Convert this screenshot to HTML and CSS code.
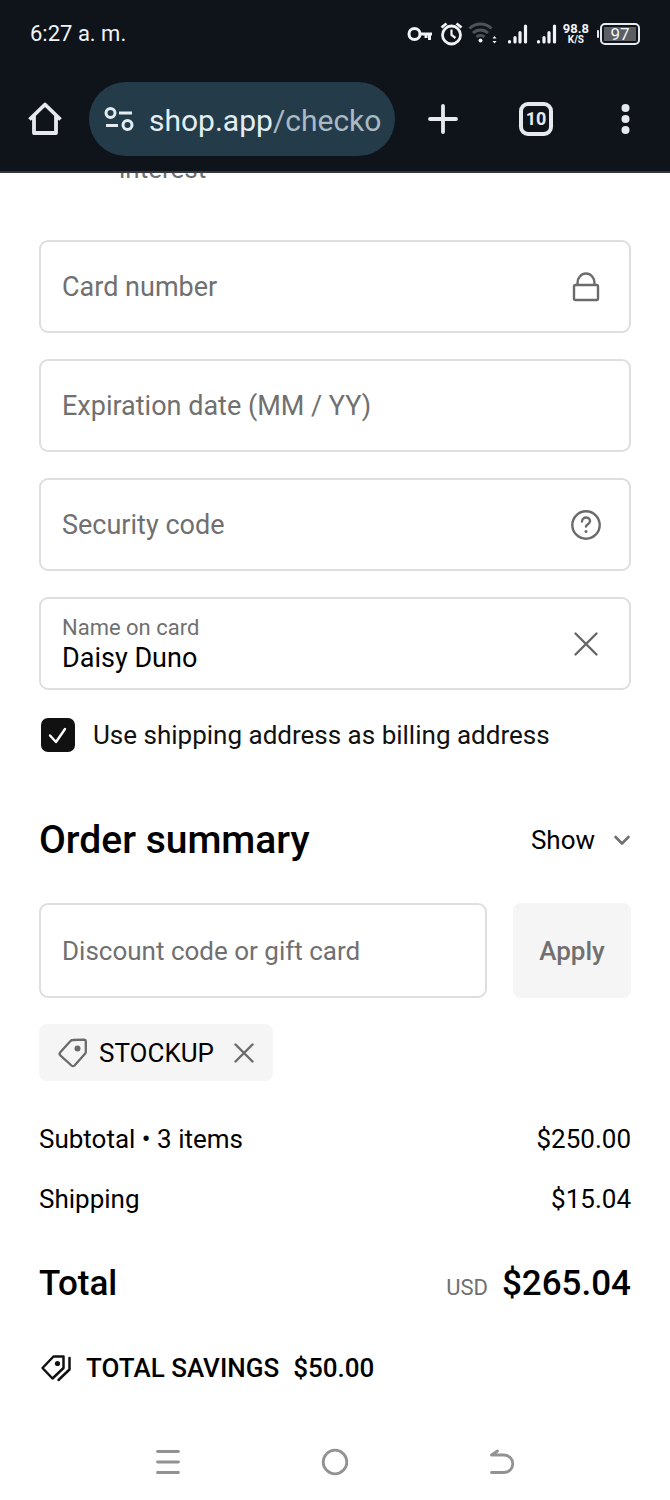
FILE: index.html
```html
<!DOCTYPE html>
<html lang="en">
<head>
<meta charset="utf-8">
<meta name="viewport" content="width=device-width, initial-scale=1">
<title>Checkout</title>
<link rel="stylesheet" href="styles.css">
</head>
<body>
<header class="chrome">
  <div class="status">
    <span class="clock">6:27 a. m.</span>
    <div class="status-icons">
      <svg width="150" height="28" viewBox="0 0 150 28" fill="none" stroke="#f1f4f7" stroke-width="3" aria-hidden="true">
        <circle cx="7.500" cy="14" r="5.500"/><path d="M13 14h12M22.500 14v6M19 14v4"/>
        <circle cx="44.500" cy="15" r="9" stroke-width="2.800"/><path d="M44.500 9.500V15l4 3" stroke-width="2.200"/><path d="M34.500 7.500l5-4M54.500 7.500l-5-4" stroke-width="2.800"/>
        <g stroke="#4d5359" stroke-width="3"><path d="M62.500 8.500a16 16 0 0 1 22 0"/><path d="M66 13a11 11 0 0 1 15 0"/><path d="M69.500 17a6 6 0 0 1 8 0"/></g>
        <g fill="#f1f4f7" stroke="none"><circle cx="73.500" cy="20.500" r="2"/><path d="M85.500 18.500l2-2.500 2 2.500zM85.500 21l2 2.500 2-2.500z"/></g>
        <g stroke-linecap="round" stroke-width="3.200"><path d="M102.500 21.500v.5M108 17.500V22M113 12.500V22M118.500 6V22M131.500 21.500v.5M137 17.500V22M142 12.500V22M147.500 6V22"/></g>
      </svg>
      <span class="speed"><span>98.8</span><span class="unit">K/S</span></span>
      <span class="battery"><span class="level">97</span></span>
    </div>
  </div>
  <div class="toolbar">
    <button class="tool" aria-label="Home"><svg width="36" height="36" viewBox="0 0 36 36" fill="none" stroke="#e6e9ed" stroke-width="3.800" stroke-linejoin="round"><path d="M2.500 18.500L18 3.500l15.500 15M7 15v17h22V15"/></svg></button>
    <button class="address">
      <svg width="30" height="24" viewBox="0 0 30 24" fill="none" stroke="#e3edf2" stroke-width="3"><circle cx="6.500" cy="6" r="4.500"/><path d="M15 6h13M2 18.500h12"/><circle cx="23.500" cy="18" r="4.500"/></svg>
      <span class="url">shop.app<span class="path">/checko</span></span>
    </button>
    <button class="tool" aria-label="New tab"><svg width="32" height="32" viewBox="0 0 32 32" stroke="#e6e9ed" stroke-width="3.800" stroke-linecap="round"><path d="M16 3v26M3 16h26"/></svg></button>
    <button class="tool" aria-label="Open tabs"><span class="tabs">10</span></button>
    <button class="tool" aria-label="Menu"><svg width="10" height="32" viewBox="0 0 10 32" fill="#e6e9ed"><circle cx="4.500" cy="5" r="4"/><circle cx="4.500" cy="16" r="4"/><circle cx="4.500" cy="27" r="4"/></svg></button>
  </div>
</header>
<main class="page">
  <div class="scrolled"><span>interest</span></div>
  <form class="card-form">
    <div class="field">
      <input type="text" placeholder="Card number" aria-label="Card number">
      <svg class="mark" width="32" height="32" viewBox="0 0 32 32" fill="none" stroke="#6b6b6b" stroke-width="2.400"><rect x="4" y="14" width="24" height="15" rx="1.500"/><path d="M7.500 14v-2a8.500 9.500 0 0 1 17 0v2"/></svg>
    </div>
    <div class="field"><input type="text" placeholder="Expiration date (MM / YY)" aria-label="Expiration date (MM / YY)"></div>
    <div class="field">
      <input type="text" placeholder="Security code" aria-label="Security code">
      <button type="button" class="mark" aria-label="Help"><svg width="32" height="32" viewBox="0 0 32 32" fill="none" stroke="#6b6b6b" stroke-width="2.400" stroke-linecap="round"><circle cx="16" cy="16" r="13.700"/><path d="M12 12.500c.3-5.500 8.500-5 8 0-.3 2.500-3.700 2.800-4 5"/><circle cx="16" cy="22.500" r="1.500" fill="#6b6b6b" stroke="none"/></svg></button>
    </div>
    <div class="field">
      <div class="stack"><label for="holder">Name on card</label><input id="holder" type="text" value="Daisy Duno"></div>
      <button type="button" class="mark" aria-label="Clear"><svg width="32" height="32" viewBox="0 0 32 32" stroke="#666" stroke-width="2.400" stroke-linecap="round"><path d="M5.500 5.500l21 21M26.500 5.500l-21 21"/></svg></button>
    </div>
    <label class="billing"><input type="checkbox" checked><svg class="tick" width="34" height="34" viewBox="0 0 34 34" fill="none" stroke="#fff" stroke-width="2.400" stroke-linecap="round" stroke-linejoin="round"><path d="M9 17.500l6 6.500 9-13"/></svg>Use shipping address as billing address</label>
  </form>
  <section class="summary">
    <div class="summary-head">
      <h2>Order summary</h2>
      <button class="show">Show<svg width="18" height="12" viewBox="0 0 18 12" fill="none" stroke="#707070" stroke-width="2.600" stroke-linecap="round" stroke-linejoin="round"><path d="M2.500 3L9 9.500 15.500 3"/></svg></button>
    </div>
    <form class="discount">
      <div class="field"><input type="text" placeholder="Discount code or gift card" aria-label="Discount code or gift card"></div>
      <button type="button" class="apply">Apply</button>
    </form>
    <div class="coupon">
      <svg width="32" height="32" viewBox="0 0 32 32" fill="none" stroke="#6b6b6b" stroke-width="2.300" stroke-linejoin="round"><path d="M16 3l11-.3q1.800 0 1.800 1.800V15q0 1-.8 1.800L17.500 28.500q-1.500 1.300-3 0L3.300 18.300q-1.500-1.500 0-3L13.500 4q1-1 2.500-1z"/><circle cx="20.500" cy="11.500" r="3" fill="#6b6b6b" stroke="none"/></svg>
      <span>STOCKUP</span>
      <button aria-label="Remove STOCKUP"><svg width="20" height="20" viewBox="0 0 20 20" stroke="#6b6b6b" stroke-width="2.400" stroke-linecap="round"><path d="M1.500 1.500l17 17M18.500 1.500l-17 17"/></svg></button>
    </div>
    <div class="row"><span>Subtotal • 3 items</span><span>$250.00</span></div>
    <div class="row"><span>Shipping</span><span>$15.04</span></div>
    <div class="total"><span>Total</span><span class="sum"><small>USD</small>$265.04</span></div>
    <div class="savings">
      <svg width="32" height="28" viewBox="0 0 32 28" fill="none" stroke="#111" stroke-width="2.500" stroke-linejoin="round" stroke-linecap="round"><path d="M13.500 2.500H23.500V14L12.500 24.500 2.500 14z"/><path d="M29.500 4v11.500L18.500 26"/><circle cx="17.500" cy="9.500" r="2.600" fill="#111" stroke="none"/></svg>
      <span>TOTAL SAVINGS</span><span>$50.00</span>
    </div>
  </section>
</main>
<nav class="system">
  <button aria-label="Recent apps"><svg width="28" height="28" viewBox="0 0 28 28" stroke="#929292" stroke-width="2.800" stroke-linecap="round"><path d="M3.500 3.500h21M3.500 14h21M3.500 24.500h21"/></svg></button>
  <button aria-label="Home screen"><svg width="28" height="28" viewBox="0 0 28 28" fill="none" stroke="#929292" stroke-width="2.800"><circle cx="14" cy="14" r="11.800"/></svg></button>
  <button aria-label="Back"><svg width="28" height="28" viewBox="0 0 28 28" fill="none" stroke="#929292" stroke-width="2.800" stroke-linecap="round" stroke-linejoin="round"><path d="M9.500 3L3.500 7H16a8.700 8.700 0 0 1 0 17.500H3.500"/></svg></button>
</nav>
</body>
</html>
```
FILE: styles.css
```css
* { box-sizing: border-box; }
body { margin: 0; background: #fff; color: #000; font-family: Roboto, "Liberation Sans", sans-serif; font-size: 26px; line-height: 32px; }
button, input { font: inherit; color: inherit; border: 0; background: none; padding: 0; margin: 0; }
svg { display: block; flex: none; }

.chrome { background: #0f141b; color: #f1f4f7; border-bottom: 2px solid #35363e; }
.status { height: 68px; padding: 0 30px; display: flex; align-items: center; justify-content: space-between; }
.clock { font-size: 22px; }
.status-icons { display: flex; align-items: center; gap: 6px; }
.speed { display: flex; flex-direction: column; align-items: center; font-size: 13px; line-height: 12px; font-weight: 700; }
.unit { font-size: 10px; line-height: 10px; }
.battery { margin-left: 5px; padding: 2px; border: 2px solid #e6e9ed; border-radius: 5px; position: relative; }
.battery::before { content: ""; position: absolute; left: -5px; top: 5px; width: 2px; height: 8px; border-radius: 2px; background: #e6e9ed; }
.level { display: block; width: 32px; background: #5b5e63; font-size: 17px; line-height: 14px; text-align: center; }
.toolbar { height: 103px; padding-bottom: 1px; display: grid; grid-template-columns: 89px 1fr 96px 90px 89px; align-items: center; }
.tool { display: flex; justify-content: center; align-items: center; }
.address { height: 74px; padding: 0 15px; border-radius: 37px; background: #243b49; display: flex; align-items: center; gap: 15px; overflow: hidden; }
.url { padding-top: 3px; font-size: 30px; color: #e3edf2; white-space: nowrap; }
.path { color: #a9bac5; }
.tabs { width: 34px; height: 34px; border: 4px solid #e6e9ed; border-radius: 9px; color: #e6e9ed; font-size: 18px; line-height: 26px; font-weight: 700; text-align: center; }

.page { padding: 0 39px; }
.scrolled { height: 67px; padding-left: 80px; overflow: hidden; color: #707070; }
.scrolled span { display: block; margin-top: -20px; }
.card-form { display: flex; flex-direction: column; gap: 26px; }
.field { height: 93px; padding: 0 27px 0 21px; border: 2px solid #dedede; border-radius: 9px; display: flex; align-items: center; }
.field input { flex: 1; width: 100%; min-width: 0; height: 32px; outline: 0; }
.card-form .field input { font-size: 27px; }
.field input::placeholder { color: #707070; opacity: 1; }
.stack { flex: 1; display: flex; flex-direction: column; }
.stack label { font-size: 22px; line-height: 28px; color: #707070; }
.billing { display: flex; align-items: center; padding: 2px 0 0 2px; gap: 18px; color: #111; }
.billing input { appearance: none; width: 34px; height: 34px; border-radius: 7px; background: #111; }
.tick { margin-left: -52px; }

.summary-head { margin-top: 63px; display: flex; justify-content: space-between; align-items: center; }
.summary-head h2 { margin: 0; font-size: 39px; line-height: 50px; font-weight: 500; }
.show { display: flex; align-items: center; gap: 18px; }
.discount { margin-top: 38px; display: flex; gap: 26px; }
.discount .field { flex: 1; height: 95px; }
.apply { width: 118px; border-radius: 8px; background: #f5f5f5; color: #707070; font-weight: 500; }
.coupon { margin: 26px 0 42px; width: fit-content; height: 57px; padding: 0 19px 0 18px; border-radius: 8px; background: #f5f5f5; display: flex; align-items: center; gap: 10px; }
.coupon button { margin-left: 10px; }
.row { margin-bottom: 28px; display: flex; justify-content: space-between; }
.total { margin-top: 47px; display: flex; justify-content: space-between; align-items: baseline; font-size: 35px; line-height: 44px; font-weight: 500; }
.total small { margin-right: 14px; font-size: 22px; font-weight: 400; color: #707070; }
.savings { margin-top: 42px; padding-left: 1px; display: flex; align-items: center; gap: 14px; font-weight: 500; }
.system { margin-top: 64px; padding: 0 84px; display: flex; }
.system button { flex: 1; display: flex; justify-content: center; }
```
